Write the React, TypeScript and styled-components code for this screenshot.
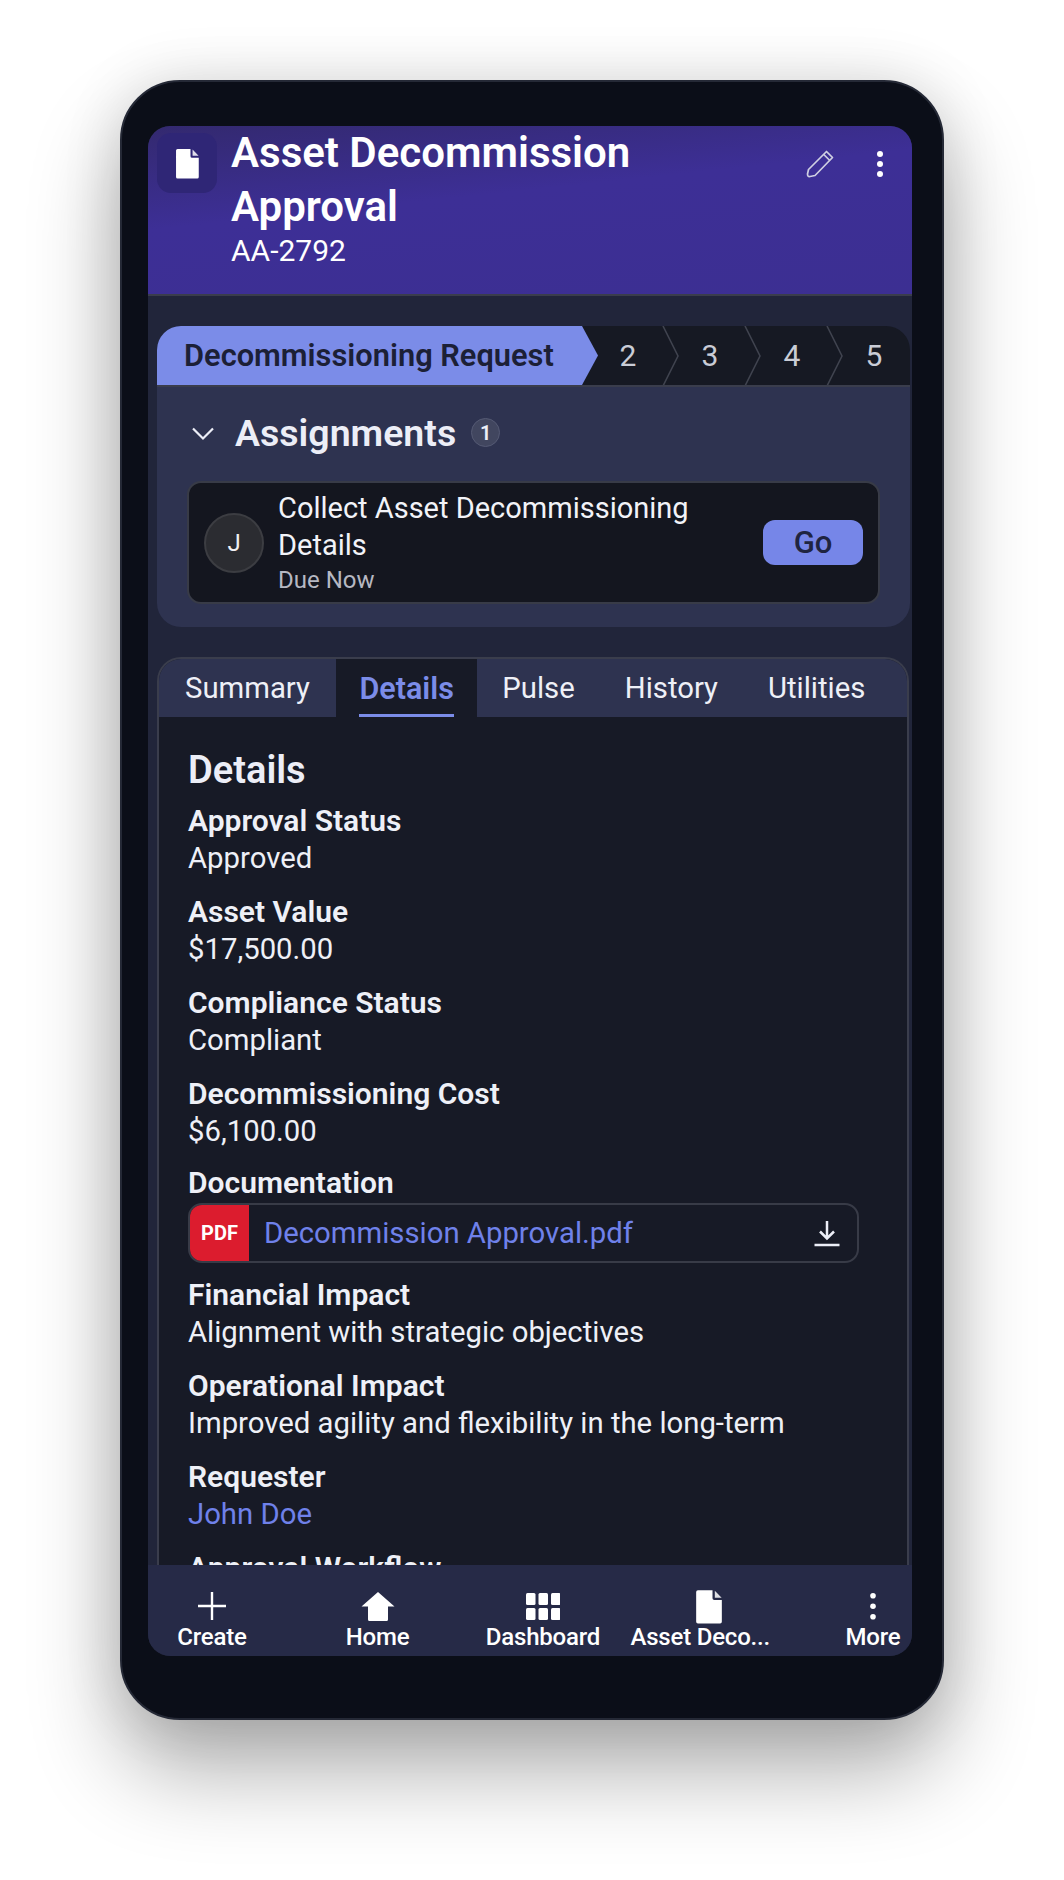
import React from "react";
import styled, { createGlobalStyle } from "styled-components";

const Global = createGlobalStyle`
  html, body { margin: 0; padding: 0; background: #fff; }
  body { font-family: Roboto, "Liberation Sans", sans-serif; width: 1064px; height: 1880px; overflow: hidden; }
  * { box-sizing: border-box; }
`;

const Phone = styled.div`
  width: 824px; height: 1640px; margin: 80px 0 0 120px; padding: 44px 30px 62px 26px;
  background: #0b0e18; border: 2px solid #252936; border-radius: 60px;
  box-shadow: 0 50px 90px rgba(0,0,0,.32), 0 0 60px rgba(0,0,0,.12);
`;
const Screen = styled.div`
  width: 764px; height: 1530px; border-radius: 22px; overflow: hidden; background: #21253a;
  display: flex; flex-direction: column;
`;
const Header = styled.header`
  flex: none; height: 170px; padding: 7px 8px 0 9px; display: flex; align-items: flex-start;
  background: linear-gradient(174deg, #33296f 0%, #3d2f96 42%, #3c2f92 100%);
  border-bottom: 2px solid #3a3d4c; color: #fff;
`;
const FileTile = styled.div`
  flex: none; width: 60px; height: 60px; border-radius: 14px; background: #2f2676;
  display: flex; align-items: center; justify-content: center;
`;
const HeaderText = styled.div` flex: 1; padding: 0 0 0 14px; margin-top: -7px; `;
const Title = styled.h1` margin: 0; font-size: 42px; line-height: 54px; font-weight: 600; width: 460px; `;
const Code = styled.div` font-size: 30px; line-height: 36px; margin-top: -1px; `;
const HeaderActions = styled.div` display: flex; align-items: center; gap: 41px; padding: 17px 19px 0 0; `;

const Body = styled.div` flex: 1; min-height: 0; padding: 30px 2px 0 9px; display: flex; flex-direction: column; `;
const Stepper = styled.div`
  flex: none; height: 61px; display: flex; background: #161923; border-radius: 24px 24px 0 0;
  border-bottom: 2px solid #3a3d4c; overflow: hidden;
`;
const ActiveStep = styled.div`
  flex: none; width: 441px; height: 100%; padding-left: 27px; display: flex; align-items: center;
  background: #7b8ce8; color: #1c2036; font-size: 30.8px; font-weight: 600;
  clip-path: polygon(0 0, 425px 0, 441px 50%, 425px 100%, 0 100%);
`;
const Step = styled.div`
  position: relative; flex: none; width: 82px; height: 100%; display: flex; align-items: center; justify-content: center;
  color: #c9ccd6; font-size: 30px; padding-right: 22px;
  svg { position: absolute; right: 0; top: 0; }
`;
const Panel = styled.section`
  flex: none; height: 240px; background: #2e3350; border-radius: 0 0 24px 24px; padding: 0 30px; margin-bottom: 30px;
`;
const PanelHead = styled.div` height: 94px; display: flex; align-items: center; gap: 19px; padding: 0 0 3px 3px; `;
const PanelTitle = styled.h2` margin: 0; font-size: 37.5px; font-weight: 600; color: #eceef7; `;
const Count = styled.span`
  width: 29px; height: 29px; border-radius: 50%; background: #41465f; border: 1px solid #555a74; color: #eceef7; margin-left: -4px;
  display: flex; align-items: center; justify-content: center; font-size: 20px; font-weight: 600;
`;
const Card = styled.div`
  height: 123px; background: #14161f; border: 2px solid #383b47; border-radius: 14px; padding: 0 15px 0 15px;
  display: flex; align-items: center; gap: 14px;
`;
const Avatar = styled.div`
  flex: none; width: 60px; height: 60px; border-radius: 50%; background: #2b2c31; border: 2px solid #3c3d42; color: #f0f0f2;
  display: flex; align-items: center; justify-content: center; font-size: 24px;
`;
const CardText = styled.div` flex: 1; `;
const CardTitle = styled.div` font-size: 29px; line-height: 37px; color: #f2f3f8; width: 430px; `;
const Due = styled.div` font-size: 24px; line-height: 32px; color: #b6b8c2; `;
const Go = styled.button`
  flex: none; width: 100px; height: 45px; border: 0; border-radius: 12px; background: #7686e8; color: #1f2440;
  font: 500 31px Roboto, sans-serif;
`;
const DetailsPanel = styled.section`
  flex: 1; min-height: 0; width: 752px; border: 2px solid #3a3d4c; border-bottom: 0; border-radius: 24px 24px 0 0; background: #171a26; overflow: hidden;
`;
const Tabs = styled.div` height: 58px; display: flex; background: #2e3350; `;
const Tab = styled.div<{ $active?: boolean }>`
  position: relative; height: 100%; padding: 0 ${p => p.$active ? "23.5px" : "25px"}; display: flex; align-items: center;
  font-size: ${p => p.$active ? "30.5px" : "29.3px"}; font-weight: ${p => p.$active ? 600 : 400};
  color: ${p => p.$active ? "#7b8ce8" : "#eef0f7"}; background: ${p => p.$active ? "#171a26" : "transparent"};
  &:first-child { padding-left: 26px; padding-right: 26px; }
  ${p => p.$active ? `&::after { content: ""; position: absolute; left: 23.5px; right: 23.5px; bottom: 0; height: 3px; background: #7b8ce8; }` : ""}
`;
const Content = styled.div` padding: 33px 29px 0; `;
const SectionTitle = styled.h3` margin: 0 0 12px; font-size: 38px; line-height: 40px; font-weight: 600; color: #eceef7; `;
const Field = styled.div<{ $doc?: boolean }>` margin: ${p => p.$doc ? "-2px 0 13px" : "0 0 16px"}; `;
const Label = styled.div<{ $tight?: boolean }>` font-size: 30px; line-height: ${p => p.$tight ? 37 : 38}px; font-weight: 600; color: #eef0f7; `;
const Value = styled.div<{ $link?: boolean }>` margin-top: -1px; font-size: 29.3px; line-height: 38px; color: ${p => p.$link ? "#6f81ea" : "#eef0f7"}; `;
const DocRow = styled.div`
  width: 671px; height: 60px; border: 2px solid #383b47; border-radius: 14px; overflow: hidden; display: flex; align-items: center; margin-top: 2px; padding-right: 16px;
`;
const PdfBadge = styled.div`
  flex: none; width: 59px; height: 100%; background: #dc1c2e; color: #fff; font-size: 20px; font-weight: 700;
  display: flex; align-items: center; justify-content: center;
`;
const DocName = styled.div` flex: 1; padding-left: 15px; font-size: 29.3px; color: #6f81ea; `;
const BottomNav = styled.nav`
  flex: none; height: 91px; background: #262a47; display: grid; grid-template-columns: 128px 128px 128px 128px 76px; column-gap: 37.5px; padding-top: 24px;
`;
const NavItem = styled.div<{ $shift?: number }>`
  display: flex; flex-direction: column; align-items: center; color: #fff;
  margin: 0 ${p => -(p.$shift ?? 0)}px 0 ${p => p.$shift ?? 0}px;
`;
const IconSlot = styled.div` height: 34px; display: flex; align-items: center; justify-content: center; `;
const NavLabel = styled.div` font-size: 24px; line-height: 32px; margin-top: -2px; white-space: nowrap; font-weight: 500; letter-spacing: -.2px; `;
const TruncLabel = styled(NavLabel)` width: 142px; margin-left: -14px; `;

const FileIcon = ({ h = 30 }: { h?: number }) => (
  <svg width={h * 0.8} height={h} viewBox="0 0 24 30"><path d="M1 2.5A1.5 1.5 0 0 1 2.5 1H15v7a1.5 1.5 0 0 0 1.5 1.5H23V28a1.5 1.5 0 0 1-1.5 1.5h-19A1.5 1.5 0 0 1 1 28z" fill="#fff"/><path d="M17 1.4 22.8 7.5H17z" fill="#fff" opacity=".85"/></svg>
);
const PencilIcon = () => (
  <svg width="28" height="28" viewBox="0 0 28 28" fill="none" stroke="#cfcfe2" strokeWidth="1.7" strokeLinejoin="round"><path d="M20.5 1.5 26.5 7.5 9 25.5 4 26.5Q1.5 27 1.5 24L2.5 19.5z"/><path d="M17.8 4.5 23.8 10.5"/></svg>
);
const Dots = ({ c = "#fff", gap = 10, r = 3 }: { c?: string; gap?: number; r?: number }) => (
  <svg width="10" height={gap * 2 + r * 2 + 2} viewBox={`0 0 10 ${gap * 2 + r * 2 + 2}`} fill={c}><circle cx="5" cy={r + 1} r={r}/><circle cx="5" cy={gap + r + 1} r={r}/><circle cx="5" cy={gap * 2 + r + 1} r={r}/></svg>
);
const Sep = () => (
  <svg width="18" height="60" viewBox="0 0 18 60" fill="none" stroke="#3f424e" strokeWidth="1.6"><path d="M1 0 16 30 1 60"/></svg>
);

const fields: [string, string, boolean?][] = [
  ["Financial Impact", "Alignment with strategic objectives"],
  ["Operational Impact", "Improved agility and flexibility in the long-term"],
  ["Requester", "John Doe", true],
];

export default function App() {
  return (
    <>
      <Global />
      <Phone>
        <Screen>
          <Header>
            <FileTile><FileIcon h={31} /></FileTile>
            <HeaderText>
              <Title>Asset Decommission Approval</Title>
              <Code>AA-2792</Code>
            </HeaderText>
            <HeaderActions><PencilIcon /><Dots /></HeaderActions>
          </Header>
          <Body>
            <Stepper>
              <ActiveStep>Decommissioning Request</ActiveStep>
              {[2, 3, 4].map(n => <Step key={n}>{n}<Sep /></Step>)}
              <Step>5</Step>
            </Stepper>
            <Panel>
              <PanelHead>
                <svg width="26" height="26" viewBox="0 0 26 26" fill="none" stroke="#eceef7" strokeWidth="2.2"><path d="M3 8.5 13 18.5 23 8.5"/></svg>
                <PanelTitle>Assignments</PanelTitle>
                <Count>1</Count>
              </PanelHead>
              <Card>
                <Avatar>J</Avatar>
                <CardText>
                  <CardTitle>Collect Asset Decommissioning Details</CardTitle>
                  <Due>Due Now</Due>
                </CardText>
                <Go>Go</Go>
              </Card>
            </Panel>
            <DetailsPanel>
              <Tabs>
                <Tab>Summary</Tab>
                <Tab $active>Details</Tab>
                <Tab>Pulse</Tab>
                <Tab>History</Tab>
                <Tab>Utilities</Tab>
              </Tabs>
              <Content>
                <SectionTitle>Details</SectionTitle>
                <Field><Label>Approval Status</Label><Value>Approved</Value></Field>
                <Field><Label>Asset Value</Label><Value>$17,500.00</Value></Field>
                <Field><Label>Compliance Status</Label><Value>Compliant</Value></Field>
                <Field><Label>Decommissioning Cost</Label><Value>$6,100.00</Value></Field>
                <Field $doc>
                  <Label $tight>Documentation</Label>
                  <DocRow>
                    <PdfBadge>PDF</PdfBadge>
                    <DocName>Decommission Approval.pdf</DocName>
                    <svg width="28" height="28" viewBox="0 0 28 28" fill="none" stroke="#eceef7" strokeWidth="2.5"><path d="M14 2V19M7 12.5 14 19.5 21 12.5M1.5 26H26.5"/></svg>
                  </DocRow>
                </Field>
                {fields.map(([l, v, link]) => (
                  <Field key={l}><Label>{l}</Label><Value $link={link}>{v}</Value></Field>
                ))}
                <Field><Label>Approval Workflow</Label></Field>
              </Content>
            </DetailsPanel>
          </Body>
          <BottomNav>
            <NavItem>
              <IconSlot><svg width="28" height="28" viewBox="0 0 28 28" stroke="#fff" strokeWidth="2.4"><path d="M14 0V28M0 14H28"/></svg></IconSlot>
              <NavLabel>Create</NavLabel>
            </NavItem>
            <NavItem>
              <IconSlot><svg width="34" height="29" viewBox="0 0 34 29" fill="#fff"><path d="M17 0 33.5 14.5H27V27.5A1.5 1.5 0 0 1 25.5 29H8.5A1.5 1.5 0 0 1 7 27.5V14.5H.5z"/></svg></IconSlot>
              <NavLabel>Home</NavLabel>
            </NavItem>
            <NavItem>
              <IconSlot><svg width="34" height="27" viewBox="0 0 34 27" fill="#fff">{[0, 15].map(y => [0, 12.5, 25].map(x => <rect key={`${x}-${y}`} x={x} y={y} width="9.5" height="12" rx="1.5" />))}</svg></IconSlot>
              <NavLabel>Dashboard</NavLabel>
            </NavItem>
            <NavItem>
              <IconSlot><FileIcon h={35} /></IconSlot>
              <TruncLabel>Asset Deco...</TruncLabel>
            </NavItem>
            <NavItem $shift={25}>
              <IconSlot><Dots gap={10.5} r={2.8} /></IconSlot>
              <NavLabel>More</NavLabel>
            </NavItem>
          </BottomNav>
        </Screen>
      </Phone>
    </>
  );
}
